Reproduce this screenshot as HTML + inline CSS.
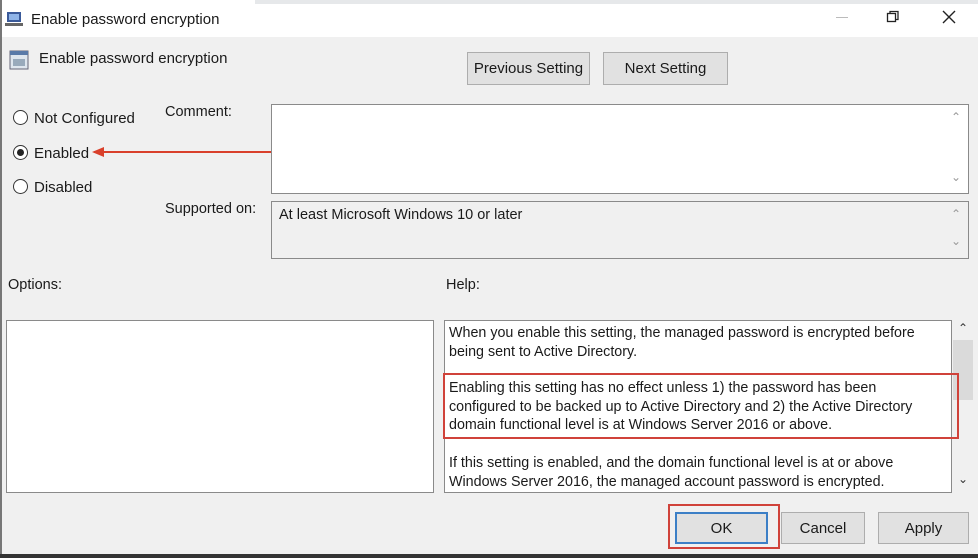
<!DOCTYPE html>
<html><head><style>
*{margin:0;padding:0;box-sizing:border-box}
body{width:978px;height:558px;overflow:hidden;background:#f0f0f0;font-family:"Liberation Sans",sans-serif;font-size:14.5px;color:#1a1a1a;position:relative}
.a{position:absolute}
.box{position:absolute;border:1px solid #8a8a8a;background:#fff}
.btn{position:absolute;background:#e1e1e1;border:1px solid #adadad;text-align:center;line-height:31px;font-size:15px}
.rad{position:absolute;width:15px;height:15px;border:1px solid #333;border-radius:50%;background:#fff}
.sb{position:absolute;color:#999;font-size:12px}
</style></head><body>
<div class="a" style="left:0;top:0;width:978px;height:37px;background:#fff"></div>
<div class="a" style="left:255px;top:0;width:723px;height:4px;background:#e6e8ea"></div>
<div class="a" style="left:0;top:0;width:2px;height:558px;background:#777"></div>
<div class="a" style="left:0;top:554px;width:978px;height:4px;background:#333"></div>
<svg class="a" style="left:5px;top:10px" width="20" height="18"><rect x="2" y="2" width="14" height="10" fill="#3a5a9a"/><rect x="4" y="4" width="10" height="6" fill="#8fb4e8"/><rect x="0" y="13" width="18" height="3" fill="#666"/></svg>
<div class="a" style="left:31px;top:11px;font-size:15px">Enable password encryption</div>
<div class="a" style="left:836px;top:17px;width:12px;height:1px;background:#bbb"></div>
<svg class="a" style="left:886px;top:10px" width="14" height="14"><rect x="1.5" y="3.5" width="8" height="8" fill="none" stroke="#222" stroke-width="1.3"/><path d="M4 3.5V1.5H12V9.5H9.5" fill="none" stroke="#222" stroke-width="1.3"/></svg>
<svg class="a" style="left:942px;top:10px" width="14" height="14"><path d="M1 1L13 13M13 1L1 13" stroke="#222" stroke-width="1.4"/></svg>
<svg class="a" style="left:9px;top:49px" width="20" height="22"><rect x="1" y="2" width="18" height="18" fill="#dfe6ee" stroke="#667"/><rect x="1" y="2" width="18" height="4" fill="#5a7aa8"/><rect x="4" y="10" width="12" height="7" fill="#9ab"/></svg>
<div class="a" style="left:39px;top:50px;font-size:15px">Enable password encryption</div>
<div class="btn" style="left:467px;top:52px;width:123px;height:33px">Previous Setting</div>
<div class="btn" style="left:603px;top:52px;width:125px;height:33px">Next Setting</div>
<div class="rad" style="left:13px;top:110px"></div>
<div class="a" style="left:34px;top:110px;font-size:15px">Not Configured</div>
<div class="rad" style="left:13px;top:145px"></div>
<div class="a" style="left:17px;top:149px;width:7px;height:7px;border-radius:50%;background:#222"></div>
<div class="a" style="left:34px;top:145px;font-size:15px">Enabled</div>
<div class="rad" style="left:13px;top:179px"></div>
<div class="a" style="left:34px;top:179px;font-size:15px">Disabled</div>
<svg class="a" style="left:90px;top:145px" width="220" height="14"><path d="M4 7H218" stroke="#d9402b" stroke-width="2"/><path d="M2 7L14 2V12Z" fill="#d9402b"/></svg>
<div class="a" style="left:165px;top:104px">Comment:</div>
<div class="a" style="left:165px;top:201px">Supported on:</div>
<div class="box" style="left:271px;top:104px;width:698px;height:90px"></div>
<div class="sb" style="left:951px;top:110px">&#8963;</div><div class="sb" style="left:951px;top:170px">&#8964;</div>
<div class="box" style="left:271px;top:201px;width:698px;height:58px;background:#f0f0f0"></div>
<div class="a" style="left:279px;top:207px">At least Microsoft Windows 10 or later</div>
<div class="sb" style="left:951px;top:207px">&#8963;</div><div class="sb" style="left:951px;top:234px">&#8964;</div>
<div class="a" style="left:8px;top:277px">Options:</div>
<div class="a" style="left:446px;top:277px">Help:</div>
<div class="box" style="left:6px;top:320px;width:428px;height:173px"></div>
<div class="box" style="left:444px;top:320px;width:508px;height:173px"></div>
<div class="a" style="left:953px;top:340px;width:20px;height:60px;background:#dadada"></div>
<div class="a" style="left:958px;top:321px;font-size:12px;color:#333">&#8963;</div>
<div class="a" style="left:958px;top:472px;font-size:12px;color:#333">&#8964;</div>
<div class="a" style="left:449px;top:324px;line-height:19px;font-size:14.3px;width:500px">When you enable this setting, the managed password is encrypted before<br>being sent to Active Directory.</div>
<div class="a" style="left:443px;top:373px;width:516px;height:66px;border:2px solid #d0423a"></div>
<div class="a" style="left:449px;top:379px;line-height:18.5px;font-size:14.3px;width:505px">Enabling this setting has no effect unless 1) the password has been<br>configured to be backed up to Active Directory and 2) the Active Directory<br>domain functional level is at Windows Server 2016 or above.</div>
<div class="a" style="left:449px;top:454px;line-height:19px;font-size:14.3px;width:500px">If this setting is enabled, and the domain functional level is at or above<br>Windows Server 2016, the managed account password is encrypted.</div>
<div class="a" style="left:668px;top:504px;width:112px;height:45px;border:2px solid #d0423a"></div>
<div class="btn" style="left:675px;top:512px;width:93px;height:32px;border:2px solid #3c7fc6;line-height:29px">OK</div>
<div class="btn" style="left:781px;top:512px;width:84px;height:32px">Cancel</div>
<div class="btn" style="left:878px;top:512px;width:91px;height:32px">Apply</div>
</body></html>
